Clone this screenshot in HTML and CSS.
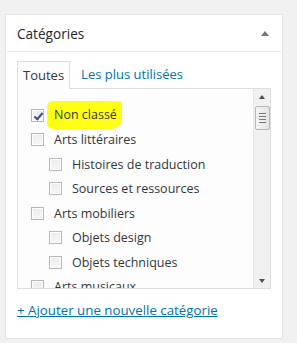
FILE: index.html
```html
<!DOCTYPE html>
<html lang="fr">
<head>
    <meta charset="UTF-8">
    <title>Catégories</title>
    <link rel="stylesheet" href="styles.css">
</head>
<body>
    <div class="postbox">
        <div class="hndle">
            <h2>Catégories</h2>
            <span class="toggle"></span>
        </div>
        <div class="inside">
            <ul class="tabs">
                <li class="tab active">Toutes</li>
                <li class="tab"><a href="#">Les plus utilisées</a></li>
            </ul>
            <div class="tabs-panel">
                <ul class="checklist">
                    <li><label><span class="cb checked"></span><span class="mark">Non classé</span></label></li>
                    <li><label><span class="cb"></span>Arts littéraires</label>
                        <ul class="children">
                            <li><label><span class="cb"></span>Histoires de traduction</label></li>
                            <li><label><span class="cb"></span>Sources et ressources</label></li>
                        </ul>
                    </li>
                    <li><label><span class="cb"></span>Arts mobiliers</label>
                        <ul class="children">
                            <li><label><span class="cb"></span>Objets design</label></li>
                            <li><label><span class="cb"></span>Objets techniques</label></li>
                        </ul>
                    </li>
                    <li><label><span class="cb"></span>Arts musicaux</label></li>
                </ul>
                <div class="scrollbar">
                    <span class="arrow up"></span>
                    <span class="thumb"><i></i><i></i><i></i><i></i></span>
                    <span class="track"></span>
                    <span class="arrow down"></span>
                </div>
            </div>
            <a href="#" class="add-new">+ Ajouter une nouvelle catégorie</a>
        </div>
    </div>
</body>
</html>
```

FILE: styles.css
```css
*{
    margin: 0;
    padding: 0;
    box-sizing: border-box;
}
body{
    background-color: #f1f1f1;
    font-family: "Open Sans", "Noto Sans", sans-serif;
    font-size: 13px;
    color: #32373c;
    padding: 14px 0 0 5px;
}
.postbox{
    width: 278px;
    height: 325px;
    background-color: #fff;
    border: 1px solid #e5e5e5;
    box-shadow: 0 1px 1px rgba(0, 0, 0, 0.04);
}
.hndle{
    height: 37px;
    border-bottom: 1px solid #eee;
    display: flex;
    align-items: center;
    justify-content: space-between;
    padding: 0 12px 0 11px;
}
h2{
    font-size: 13.6px;
    font-weight: 400;
    color: #23282d;
}
.toggle{
    width: 0;
    height: 0;
    border-left: 4px solid transparent;
    border-right: 4px solid transparent;
    border-bottom: 5px solid #72777c;
    margin-right: 1px;
}
.inside{
    padding: 8px 11px 0 11px;
}
.tabs{
    list-style: none;
    display: flex;
    height: 28px;
}
.tab{
    padding: 0 5px;
    line-height: 26px;
    border: 1px solid transparent;
    border-bottom: none;
}
.tab.active{
    border-color: #ddd;
    background-color: #fdfdfd;
    position: relative;
    top: 1px;
    height: 28px;
}
.tab a{
    color: #0073aa;
    text-decoration: none;
    padding-left: 5px;
}
.tabs-panel{
    height: 201px;
    border: 1px solid #ddd;
    background-color: #fdfdfd;
    display: flex;
    overflow: hidden;
}
.checklist{
    flex: 1;
    list-style: none;
    padding: 14px 0 0 13px;
    font-size: 12.5px;
    overflow: hidden;
}
.checklist li{
    list-style: none;
}
.children{
    padding-left: 18px;
}
.checklist label{
    display: flex;
    align-items: center;
    height: 24.5px;
    white-space: nowrap;
}
.cb{
    display: inline-block;
    width: 13px;
    height: 13px;
    border: 1px solid #b4b9be;
    background: linear-gradient(#ececec, #f7f7f7);
    box-shadow: inset 0 0 0 1px #fff;
    margin-right: 10px;
    flex-shrink: 0;
    position: relative;
}
.cb.checked::after{
    content: "";
    position: absolute;
    left: 4px;
    top: 1px;
    width: 3px;
    height: 7px;
    border-right: 2px solid #3c4aa0;
    border-bottom: 2px solid #3c4aa0;
    transform: rotate(40deg);
}
.mark{
    background-color: #ffff14;
    padding: 5px 5px 6px 7px;
    margin-left: -7px;
    border-radius: 6px 3px 10px 6px;
}
.scrollbar{
    width: 17px;
    flex-shrink: 0;
    background-color: #f0f0f0;
    border-left: 1px solid #e8e8e8;
    display: flex;
    flex-direction: column;
    align-items: center;
    padding: 0 1px;
}
.arrow{
    width: 0;
    height: 0;
    border-left: 3px solid transparent;
    border-right: 3px solid transparent;
    margin: 6px 0;
}
.arrow.up{
    border-bottom: 4px solid #505050;
}
.arrow.down{
    border-top: 4px solid #505050;
    margin-bottom: 5px;
}
.thumb{
    width: 15px;
    height: 24px;
    margin-top: 1px;
    border: 1px solid #b8b8b8;
    border-radius: 2px;
    background: linear-gradient(to right, #f4f4f4, #e4e4e4);
    display: flex;
    flex-direction: column;
    align-items: center;
    justify-content: center;
    gap: 2px;
}
.thumb i{
    display: block;
    width: 7px;
    height: 1px;
    background-color: #777;
}
.track{
    flex: 1;
}
.add-new{
    display: inline-block;
    margin-top: 12px;
    color: #0073aa;
    text-decoration: underline;
    line-height: 18px;
    font-size: 13.3px;
}
```
